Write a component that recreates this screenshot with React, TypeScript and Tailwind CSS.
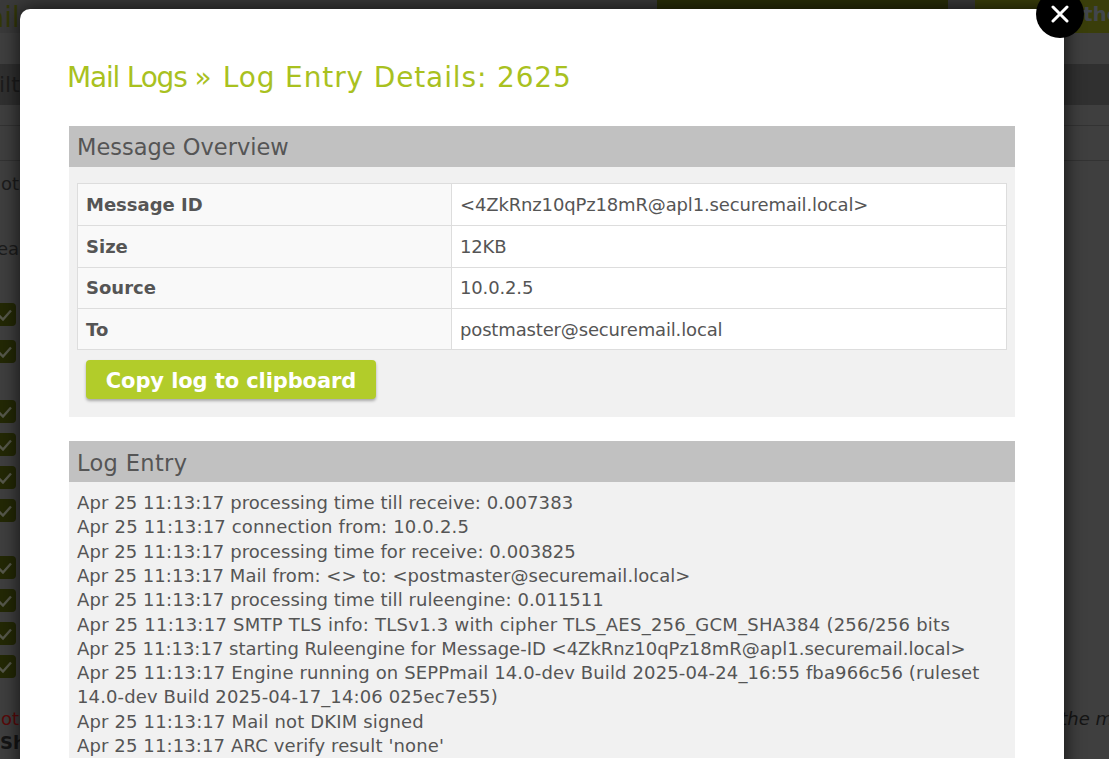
const log = [
  ["Apr 25 11:13:17 processing time till receive: 0.007383", "tracking-[0.07px]"],
  ["Apr 25 11:13:17 connection from: 10.0.2.5", "tracking-[0.17px]"],
  ["Apr 25 11:13:17 processing time for receive: 0.003825", "tracking-[0.07px]"],
  ["Apr 25 11:13:17 Mail from: <> to: <postmaster@securemail.local>", "tracking-[0.05px]"],
  ["Apr 25 11:13:17 processing time till ruleengine: 0.011511", "tracking-[0.07px]"],
  ["Apr 25 11:13:17 SMTP TLS info: TLSv1.3 with cipher TLS_AES_256_GCM_SHA384 (256/256 bits", "tracking-[0.25px]"],
  ["Apr 25 11:13:17 starting Ruleengine for Message-ID <4ZkRnz10qPz18mR@apl1.securemail.local>", "tracking-[0px]"],
  ["Apr 25 11:13:17 Engine running on SEPPmail 14.0-dev Build 2025-04-24_16:55 fba966c56 (ruleset 14.0-dev Build 2025-04-17_14:06 025ec7e55)", "tracking-[0.13px]"],
  ["Apr 25 11:13:17 Mail not DKIM signed", "tracking-[0.15px]"],
  ["Apr 25 11:13:17 ARC verify result 'none'", "tracking-[0.12px]"],
];

const rows = [
  ["Message ID", "<4ZkRnz10qPz18mR@apl1.securemail.local>"],
  ["Size", "12KB"],
  ["Source", "10.0.2.5"],
  ["To", "postmaster@securemail.local"],
];

function Check() {
  return (
    <div className="-ml-[7px] flex h-[23px] w-[23px] items-center justify-center rounded-[4px] bg-[#232805]">
      <svg width="16" height="16" viewBox="0 0 16 16" fill="none" stroke="#55574a" strokeWidth="2.4"><path d="M2 8.5l4 4 8-9" /></svg>
    </div>
  );
}

function CheckGroup({ count, gap }: { count: number; gap: string }) {
  return (
    <div className={`flex flex-col ${gap}`}>
      {Array.from({ length: count }, (_, i) => <Check key={i} />)}
    </div>
  );
}

export default function App() {
  return (
    <div className="relative h-[759px] w-[1109px] overflow-hidden bg-[#3f3f3f] font-['DejaVu_Sans',sans-serif] text-[18px] text-[#555555]">
      {/* Dimmed page behind the dialog */}
      <div className="flex h-full flex-col">
        <header className="flex h-[33px] shrink-0 bg-[#3a3a3a]">
          <div className="-ml-[37px] text-[28px] leading-[36px] text-[#333808] whitespace-nowrap">Mail</div>
          <div className="ml-auto flex gap-[27px]">
            <div className="w-[291px] bg-[#2a2e08]" />
            <div className="w-[134px] overflow-hidden whitespace-nowrap bg-[#3a3e0a] pl-[108px] text-[20px] font-bold leading-[29px] text-[#42464c]">the</div>
          </div>
        </header>
        <div className="mt-[31px] flex h-[41px] items-center bg-[#303030] text-[22px] text-[#1c1c1c]"><span className="-ml-[1px]">ilt</span></div>
        <div className="mt-5 h-[36px] border-y border-[#333333]" />
        <div className="mt-[11px] ml-[1px] text-[#1c1c1c] leading-6">ot</div>
        <div className="mt-[41px] -ml-[3px] text-[#1c1c1c] leading-6">ea</div>
        <div className="mt-[42px] flex flex-col">
          <CheckGroup count={2} gap="gap-[14px]" />
          <div className="mt-[37px]"><CheckGroup count={4} gap="gap-[10px]" /></div>
          <div className="mt-[34px]"><CheckGroup count={4} gap="gap-[10px]" /></div>
        </div>
        <div className="mt-[29px] flex justify-between leading-6">
          <span className="ml-[1px] text-[#5a0a0a]">ot</span>
          <span className="-mr-[4px] italic text-[#151515] whitespace-nowrap">the m</span>
        </div>
        <div className="font-bold text-[#151515] leading-6">Sh</div>
      </div>

      {/* Dialog */}
      <div className="absolute left-[20px] top-[9px] h-[900px] w-[1044px] rounded-[10px] bg-white pl-[47px] pr-[49px] pt-[49px] shadow-[0_0_20px_rgba(0,0,0,0.75)]">
        <h1 className="flex text-[28px] leading-[40px] text-[#a9c11f] font-normal whitespace-nowrap">
          <span className="tracking-[-1.2px]">Mail Logs</span>
          <span className="ml-[8px]">»</span>
          <span className="ml-[11px] tracking-[0.87px]">Log Entry Details: 2625</span>
        </h1>

        <section className="mt-[28px] ml-[2px] bg-[#f1f1f1] pb-[18px]">
          <h2 className="h-[41px] bg-[#c1c1c1] px-2 text-[22.5px] leading-[43px] font-normal">Message Overview</h2>
          <div className="mx-[8px] mt-4 border border-[#dddddd] bg-white">
            {rows.map(([k, v], i) => (
              <div key={k} className={`flex h-[41.35px] items-center ${i ? "border-t border-[#dddddd]" : ""}`}>
                <div className="flex h-full w-[374px] items-center border-r border-[#dddddd] bg-[#f9f9f9] pl-2 font-bold">{k}</div>
                <div className="pl-2 tracking-[-0.15px]">{v}</div>
              </div>
            ))}
          </div>
          <button className="ml-[17px] mt-[10px] block h-[39px] w-[290px] rounded-[4px] bg-[#b2cc2a] pt-[3px] text-[21px] font-bold tracking-[-0.1px] text-white shadow-[0_2px_3px_rgba(0,0,0,0.3)]">
            Copy log to clipboard
          </button>
        </section>

        <section className="mt-6 ml-[2px] bg-[#f1f1f1]">
          <h2 className="h-[41px] bg-[#c1c1c1] px-2 text-[22.5px] leading-[45px] font-normal tracking-[0.35px]">Log Entry</h2>
          <div className="px-2 pt-[8.7px] leading-[24.3px]">
            {log.map(([l, t]) => <div key={l} className={t}>{l}</div>)}
          </div>
        </section>
      </div>

      {/* Close button */}
      <div className="absolute left-[1036px] top-[-10px] flex h-[48px] w-[48px] items-center justify-center rounded-full bg-black">
        <svg width="18" height="18" viewBox="0 0 18 18" stroke="white" strokeWidth="3" strokeLinecap="round"><path d="M2 2l14 14M16 2L2 16" /></svg>
      </div>
    </div>
  );
}
